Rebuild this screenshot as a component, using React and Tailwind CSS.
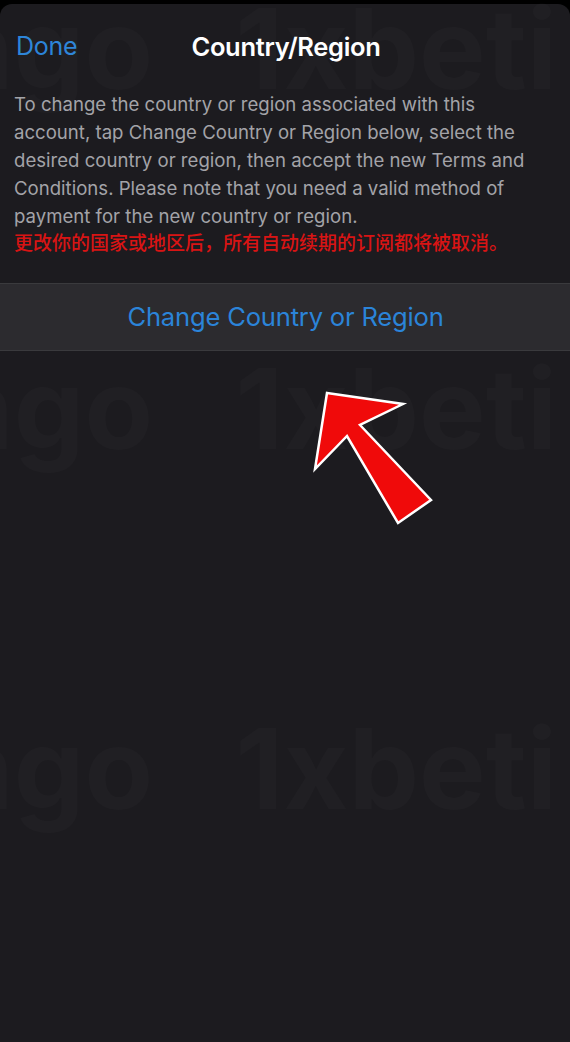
const font = { fontFamily: "Inter, 'Noto Sans CJK SC', sans-serif" };

function Watermark({ top }) {
    return (
        <div
            className={`pointer-events-none absolute left-[-56px] ${top} flex gap-[82px] text-[112px] font-bold leading-none text-white/[0.02] whitespace-nowrap select-none`}
        >
            <span>ngo</span>
            <span>1xbeti</span>
        </div>
    );
}

function Arrow() {
    return (
        <svg className="pointer-events-none absolute left-0 top-0" width="570" height="1042">
            <polygon
                points="327,393 403,404 360,425 431,500 398,523 347,436 315,469"
                fill="#f00a0a"
                stroke="#ffffff"
                strokeWidth="2.5"
                strokeLinejoin="miter"
            />
        </svg>
    );
}

export default function App() {
    return (
        <div className="relative h-[1042px] w-[570px] overflow-hidden bg-black" style={font}>
            <div className="mt-[4px] h-[1038px] rounded-t-[12px] bg-[#1c1b1f]">
                {/* 헤더 */}
                <div className="relative flex h-[86px] items-center px-4">
                    <button className="text-[25px] tracking-[-0.3px] text-[#2b84d9]">Done</button>
                    <h1 className="absolute left-0 right-0 pl-[2px] text-center text-[25.5px] font-semibold tracking-[-0.3px] text-white">
                        Country/Region
                    </h1>
                </div>

                <div className="px-[14px] text-[18.6px] leading-[28px] text-[#a3a3a8] whitespace-nowrap">
                    <p>
                        To change the country or region associated with this
                        <br />
                        account, tap Change Country or Region below, select the
                        <br />
                        desired country or region, then accept the new Terms and
                        <br />
                        Conditions. Please note that you need a valid method of
                        <br />
                        payment for the new country or region.
                    </p>
                    <p className="text-[19px] font-medium leading-[28px] text-[#d81414]">
                        更改你的国家或地区后，所有自动续期的订阅都将被取消。
                    </p>
                </div>

                <div className="mt-[25px] flex h-[68px] items-center justify-center border-y border-[#3a3a3d] bg-[#2c2b2f]">
                    <button className="pl-[1px] text-[25.6px] tracking-[-0.2px] text-[#2b84d9]">Change Country or Region</button>
                </div>
            </div>

            <Watermark top="top-[-8px]" />
            <Watermark top="top-[352px]" />
            <Watermark top="top-[712px]" />
            <Arrow />
        </div>
    );
}
